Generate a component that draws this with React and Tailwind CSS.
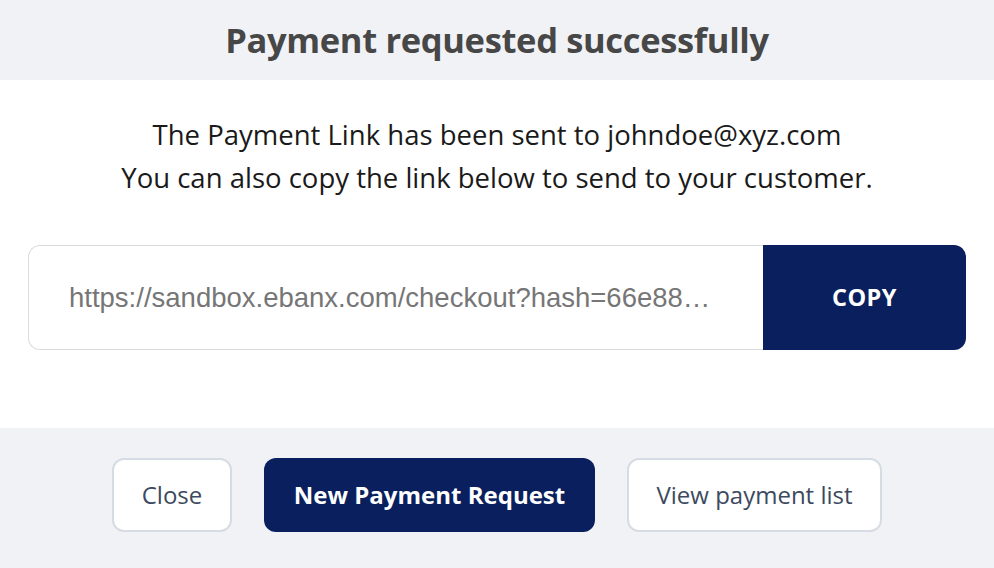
import React from 'react';

const link = 'https://sandbox.ebanx.com/checkout?hash=66e88a1f0c4b2d93e7a5';

const App = () => {
    return (
        <div className="w-[994px] h-[568px] flex flex-col bg-white" style={{ fontFamily: '"Open Sans", sans-serif' }}>
            {/* header */}
            <div className="h-[80px] bg-[#f1f2f6] flex items-center justify-center">
                <h1 className="text-[34.5px] font-bold text-[#474747] tracking-[-0.01em]">Payment requested successfully</h1>
            </div>

            {/* body */}
            <div className="h-[348px] flex flex-col items-center pt-[33px] px-[28px]">
                <p className="text-[27.5px] leading-[43px] text-[#1a1a1a] text-center whitespace-nowrap">
                    The Payment Link has been sent to johndoe@xyz.com
                    <br />
                    You can also copy the link below to send to your customer.
                </p>
                <div className="mt-[46px] w-full h-[105px] flex">
                    <div className="flex-1 min-w-0 flex items-center border border-[#dcdcdc] border-r-0 rounded-l-[12px] pl-[40px] pr-[48px]">
                        <span
                            className="truncate text-[27.5px] text-[#767676]"
                            style={{ fontFamily: '"Liberation Sans", Arial, sans-serif' }}
                        >
                            {link}
                        </span>
                    </div>
                    <button className="w-[203px] shrink-0 bg-[#0a1f5e] rounded-r-[12px] text-white text-[23.5px] font-bold tracking-[0.02em]">
                        COPY
                    </button>
                </div>
            </div>

            {/* footer */}
            <div className="flex-1 bg-[#f1f2f6] flex items-start justify-center gap-[32px] pt-[30px]">
                <button className="h-[74px] w-[120px] bg-white border-2 border-[#d6dce3] rounded-[12px] text-[24px] text-[#3d4a5e]">
                    Close
                </button>
                <button className="h-[74px] w-[331px] bg-[#0a1f5e] rounded-[12px] text-[24px] font-bold text-white">
                    New Payment Request
                </button>
                <button className="h-[74px] w-[255px] bg-white border-2 border-[#d6dce3] rounded-[12px] text-[24px] text-[#3d4a5e]">
                    View payment list
                </button>
            </div>
        </div>
    );
};

export default App;
